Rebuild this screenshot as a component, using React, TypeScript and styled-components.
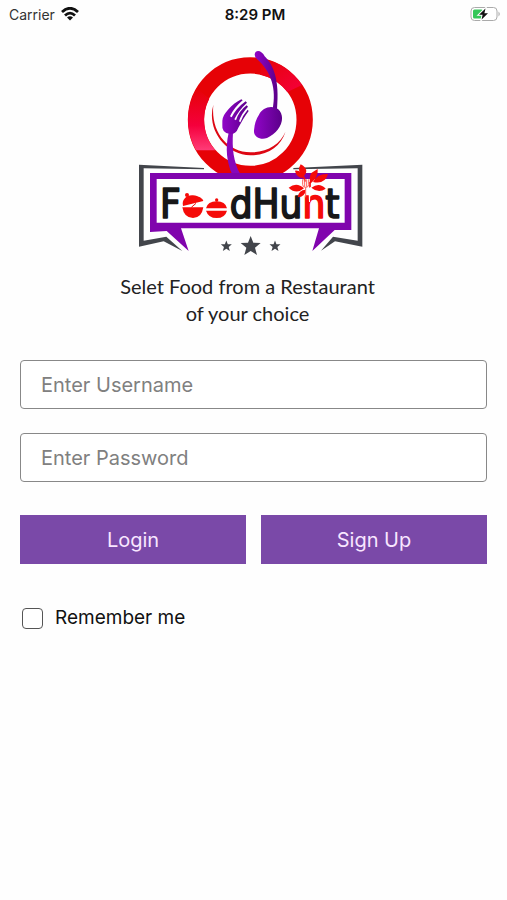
import React from "react";
import styled, { createGlobalStyle } from "styled-components";

const GlobalStyle = createGlobalStyle`
  *, *::before, *::after { box-sizing: border-box; }
  body {
    margin: 0;
    background: #fefefe;
    color: #111;
    font-family: Inter, "Liberation Sans", sans-serif;
  }
`;

const Screen = styled.div`
  min-height: 100vh;
  display: flex;
  flex-direction: column;
`;

const StatusBar = styled.header`
  display: grid;
  grid-template-columns: 1fr auto 1fr;
  align-items: center;
  height: 28px;
  padding: 0 6px 0 9px;
  font-size: 14px;
`;

const Carrier = styled.div`
  display: flex;
  align-items: center;
  gap: 6px;
  color: #333;
`;

const Clock = styled.time`
  font-size: 15px;
  font-weight: 600;
`;

const Battery = styled.svg`
  justify-self: end;
`;

const Main = styled.main`
  display: flex;
  flex-direction: column;
  padding: 12px 20px 20px;
`;

const Brand = styled.svg`
  align-self: center;
  width: 240px;
  height: 220px;
  margin-right: 7px;
`;

const Tagline = styled.p`
  align-self: center;
  width: 260px;
  margin: 13px 12px 0 0;
  font-family: Lato, sans-serif;
  font-size: 20px;
  line-height: 27px;
  text-align: center;
  color: #222;
`;

const Form = styled.form`
  display: flex;
  flex-direction: column;
  gap: 24px;
  margin-top: 33px;
`;

const Field = styled.input`
  width: 100%;
  height: 49px;
  padding: 0 20px;
  border: 1px solid #888;
  border-radius: 4px;
  background: #fff;
  color: #111;
  font: inherit;
  font-size: 20px;

  &::placeholder { color: #808080; opacity: 1; }
`;

const Actions = styled.div`
  display: grid;
  grid-template-columns: 1fr 1fr;
  gap: 15px;
  margin-top: 9px;
`;

const ActionButton = styled.button`
  height: 49px;
  border: 0;
  padding: 0;
  background: #7a49a8;
  color: #f8e6ff;
  font: inherit;
  font-size: 20px;
  cursor: pointer;
`;

const Remember = styled.label`
  display: flex;
  align-items: center;
  align-self: flex-start;
  gap: 12px;
  margin: 18px 0 0 2px;
  font-size: 19px;
  line-height: 24px;
`;

const Checkbox = styled.input`
  appearance: none;
  width: 21px;
  height: 21px;
  margin: 0;
  border: 1px solid #555;
  border-radius: 4px;
  background: #fff;

  &:checked { background: #7a49a8; }
`;

const Lettering = styled.text`
  font-family: "DejaVu Sans Condensed", "DejaVu Sans", sans-serif;
  font-size: 120px;
  fill: #171719;
  stroke: #171719;
  stroke-width: 5px;
  stroke-linejoin: round;
`;

const RedLetter = styled.tspan`
  fill: #f50b09;
  stroke: #f50b09;
`;

const STAR = "M0-30 8-10 30-9 13 5 19 27 0 15-19 27-13 5-30-9-8-10Z";

function Wifi() {
  return (
    <svg width="18" height="14" viewBox="0 0 18 14" aria-hidden="true">
      <g fill="none" stroke="#111" strokeWidth="2.8">
        <path d="M1 5Q9-2.4 17 5" />
        <path d="M4 8.5Q9 3.8 14 8.5" />
      </g>
      <path d="M6 10.6Q9 7.8 12 10.6L9 13.6Z" fill="#111" />
    </svg>
  );
}

function BatteryIcon() {
  return (
    <Battery width="31" height="16" viewBox="0 0 31 16" role="img" aria-label="Charging">
      <rect x="1" y="1.5" width="26" height="13" rx="3.5" fill="#fff" stroke="#aaa" />
      <rect x="3" y="3.5" width="10" height="9" rx="1.5" fill="#34c759" />
      <path d="M28.5 5.5Q31 8 28.5 10.5Z" fill="#aaa" />
      <path d="M15.5 2.5 9 8.8H12.6L11.6 13.5 18 7.2H14.4Z" fill="#111" stroke="#fff" strokeWidth="2" paintOrder="stroke" />
    </Battery>
  );
}

function Logo() {
  return (
    <Brand viewBox="0 0 720 660" role="img" aria-label="FoodHunt">
      <defs>
        <linearGradient id="violet" x1="0" x2="1">
          <stop offset="0" stopColor="#9105c8" />
          <stop offset="1" stopColor="#5b0089" />
        </linearGradient>
        <linearGradient id="shineLeft" x1="0" y1="0" x2="0" y2="1">
          <stop offset="0" stopColor="#e60206" />
          <stop offset=".6" stopColor="#f5003c" />
          <stop offset="1" stopColor="#ff3c78" />
        </linearGradient>
        <linearGradient id="shineRight" x1="0" y1="0" x2="1" y2="1">
          <stop offset="0" stopColor="#e60206" />
          <stop offset="1" stopColor="#f5003c" />
        </linearGradient>
      </defs>

      <circle cx="361" cy="239" r="163" fill="none" stroke="#e60206" strokeWidth="49" />
      <path d="M200 145A187 187 0 0 0 198 331H256A138 138 0 0 1 238 176Z" fill="url(#shineLeft)" />
      <path d="M398 56A187 187 0 0 1 516 135L472 156A138 138 0 0 0 390 104Z" fill="url(#shineRight)" />
      <path d="M250 194C230 266 282 342 361 346 413 347 452 321 467 274 450 315 411 337 361 337 291 335 242 276 250 194Z" fill="#dd0713" />

      <path d="M296 278C285 325 291 368 306 402H331C310 365 306 323 309 278Z" fill="#8708bb" />
      <path
        d="M277 242C278 222 306 192 334 178L338 181Q312 203 300 229L305 232Q319 204 347 184L351 188Q325 212 313 238L318 241Q326 214 350 196L354 200Q333 222 327 244L331 247Q338 226 353 209L356 213C343 230 335 246 325 263Q318 283 300 282 274 278 277 255Z"
        fill="url(#violet)"
      />
      <path d="M374 43C377 27 396 32 404 49 431 76 449 121 441 207H428C440 148 424 94 380 56Q374 51 374 43Z" fill="url(#violet)" />
      <path d="M387 224C397 202 425 194 444 207 471 232 450 276 411 294 392 301 370 291 372 271Q374 243 387 224Z" fill="url(#violet)" />

      <path d="M27 374 222 384V388L41 385V602L109 590 157 633 101 604 27 620Z" fill="#42454b" />
      <path d="M697 374 490 384V388L683 385V602L609 590 573 632 615 604 697 620Z" fill="#42454b" />
      <path d="M60 399H664V570H614L547 633 567 565H153L176 633 110 573 60 576Z" fill="#8004ad" />
      <path d="M80 417H644V548H80Z" fill="#fff" />

      <Lettering x="90" y="533">F</Lettering>
      <Lettering x="299" y="533">
        dHu<RedLetter>n</RedLetter>t
      </Lettering>

      <g fill="#f50b09">
        <path d="M159 498C154 479 170 464 189 466 206 468 218 475 220 483Z" />
        <circle cx="171" cy="465" r="6" />
        <path d="M157 502H220Q215 534 189 534 162 534 157 502Z" />
        <path d="M228 505Q233 484 260 484 286 484 291 505Z" />
        <circle cx="260" cy="480" r="5" />
        <path d="M228 512H291Q285 534 260 534 235 534 228 512Z" />
        <path d="M512 373Q541 389 520 410 499 393 512 373Z" />
        <path d="M495 392Q516 390 519 414 499 413 495 392Z" />
        <path d="M545 398 563 387Q566 412 541 431 536 410 545 398Z" />
        <path d="M594 402Q585 434 549 426 563 400 594 402Z" />
        <path d="M544 443Q568 426 587 446 566 462 544 443Z" />
        <path d="M476 443Q500 424 522 445 499 465 476 443Z" />
        <path d="M503 472Q506 449 527 449 526 471 503 472Z" />
      </g>
      <path d="M517 405Q524 412 525 425M540 425V450" fill="none" stroke="#f50b09" strokeWidth="5" />
      <path d="M518 418V434Q518 442 527 442 536 442 536 434V418M524 418V440M530 418V440M527 442V472" fill="none" stroke="#ff625c" strokeWidth="3" />
      <path d="M541 440C550 448 546 457 541 460L540 486H537L536 460C531 456 534 445 541 440Z" fill="#fff" />
      <path d="M184 502 198 490" stroke="#f50b09" strokeWidth="3" />

      <g fill="#42454b">
        <path d={STAR} transform="translate(362 618)" />
        <path d={STAR} transform="translate(289 618) scale(.55)" />
        <path d={STAR} transform="translate(435 618) scale(.55)" />
      </g>
    </Brand>
  );
}

export default function App() {
  return (
    <Screen>
      <GlobalStyle />
      <StatusBar>
        <Carrier>
          Carrier
          <Wifi />
        </Carrier>
        <Clock>8:29 PM</Clock>
        <BatteryIcon />
      </StatusBar>
      <Main>
        <Logo />
        <Tagline>Selet Food from a Restaurant of your choice</Tagline>
        <Form onSubmit={(event) => event.preventDefault()}>
          <Field type="text" placeholder="Enter Username" aria-label="Enter Username" />
          <Field type="password" placeholder="Enter Password" aria-label="Enter Password" />
          <Actions>
            <ActionButton type="submit">Login</ActionButton>
            <ActionButton type="button">Sign Up</ActionButton>
          </Actions>
          <Remember>
            <Checkbox type="checkbox" />
            Remember me
          </Remember>
        </Form>
      </Main>
    </Screen>
  );
}
